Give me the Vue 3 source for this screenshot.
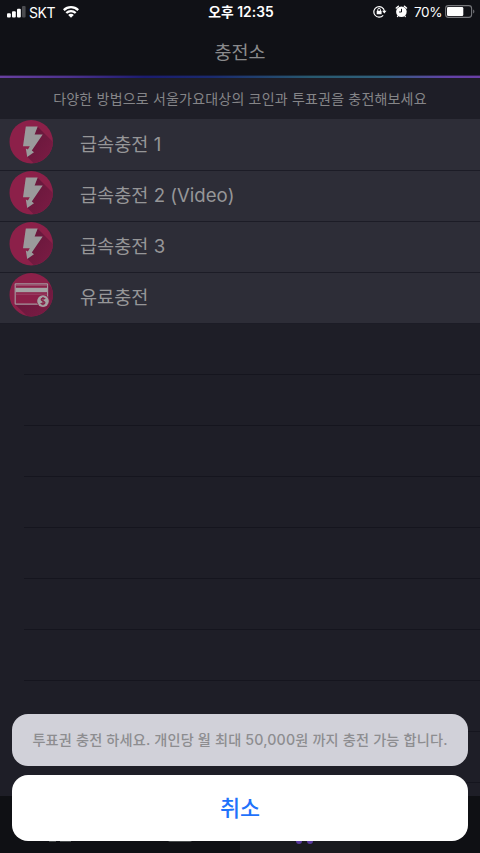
<script setup>
const methods = [
  { label: '급속충전 1', icon: 'bolt' },
  { label: '급속충전 2 (Video)', icon: 'bolt' },
  { label: '급속충전 3', icon: 'bolt' },
  { label: '유료충전', icon: 'card' },
]
const emptyRows = 9
</script>

<template>
  <main class="screen">
    <header class="top">
      <div class="status">
        <div class="status-left">
          <svg class="signal" width="19" height="12" viewBox="0 0 19 12">
            <rect x="0" y="7.3" width="3.8" height="4.2" rx="1" fill="#fff" />
            <rect x="5" y="5.2" width="3.8" height="6.3" rx="1" fill="#fff" />
            <rect x="10" y="2.8" width="3.8" height="8.7" rx="1" fill="#fff" />
            <rect x="15" y="0" width="3.6" height="11.5" rx="1" fill="#4b4c50" />
          </svg>
          <span class="carrier">SKT</span>
          <svg class="wifi" width="16" height="12" viewBox="0 0 16 12" fill="none" stroke="#fff" stroke-width="2.3">
            <path d="M0.8 4.1C4.8 0.2 11.2 0.2 15.2 4.1" />
            <path d="M3.3 7C5.9 4.5 10.1 4.5 12.7 7" />
            <path d="M5.2 8.9C6.7 7.4 9.3 7.4 10.8 8.9L8 11.8Z" fill="#fff" stroke="none" />
          </svg>
        </div>
        <div class="clock">오후 12:35</div>
        <div class="status-right">
          <svg class="lock" width="14" height="13" viewBox="0 0 14 13" fill="none" stroke="#fff" stroke-width="1.2">
            <path d="M10.2 10.3A5.3 5.3 0 1 1 11.4 6" />
            <path d="M9.1 5.8H13.5L11.3 8.6Z" fill="#fff" stroke="none" />
            <rect x="3.7" y="5.7" width="4.9" height="3.6" rx=".4" fill="#fff" stroke="none" />
            <path d="M4.7 6V4.8A1.4 1.4 0 0 1 7.5 4.8V6" stroke-width=".9" />
          </svg>
          <svg class="alarm" width="13" height="13" viewBox="0 0 13 13">
            <circle cx="6.4" cy="6.7" r="5.3" fill="#fff" />
            <path d="M1.3 3L3.4 1.2M9.4 1.2L11.5 3" stroke="#fff" stroke-width="1.5" stroke-linecap="round" />
            <path d="M3 10.8L2.4 11.6M9.8 10.8L10.4 11.6" stroke="#fff" stroke-width="1.1" stroke-linecap="round" />
            <path d="M6.5 3.8V7H4.1" stroke="#101116" stroke-width="1" fill="none" />
          </svg>
          <span class="percent">70%</span>
          <svg class="battery" width="30" height="13" viewBox="0 0 30 13">
            <rect x=".6" y=".6" width="26" height="11.8" rx="2.8" fill="none" stroke="#77787c" stroke-width="1.1" />
            <rect x="2" y="2" width="16.3" height="9" rx="1.3" fill="#fff" />
            <path d="M28.2 4.5C29.8 5 29.8 8 28.2 8.5Z" fill="#77787c" />
          </svg>
        </div>
      </div>
      <h1 class="title">충전소</h1>
      <div class="rainbow"></div>
    </header>

    <p class="intro">다양한 방법으로 서울가요대상의 코인과 투표권을 충전해보세요</p>

    <ul class="list">
      <li v-for="(m, i) in methods" :key="m.label" class="row">
        <svg class="badge" width="44" height="44" viewBox="0 0.4 44 44">
          <defs>
            <clipPath :id="'disc' + i"><circle cx="22.2" cy="22.1" r="21.7" /></clipPath>
            <linearGradient :id="'shade' + i" x1="0" y1="0" x2="1" y2="1">
              <stop offset="0" stop-color="#64163a" />
              <stop offset="1" stop-color="#801d46" />
            </linearGradient>
          </defs>
          <circle cx="22.2" cy="22.1" r="21.7" fill="#8c2049" />
          <g :clip-path="`url(#disc${i})`">
            <template v-if="m.icon === 'bolt'">
              <path d="M28.5 7L49 27.5V50H31L18 37Z" :fill="`url(#shade${i})`" />
              <path d="M16.8 6.9H28.7L25.6 15H33.7L22.8 30.8L25 32.6L18.2 37.4L16.8 28.8L18.9 30L20.8 26.6H14Z" fill="#9a9a9b" />
            </template>
            <template v-else>
              <path d="M38.5 11L52 24V53H28L5.5 31.5Z" :fill="`url(#shade${i})`" />
              <rect x="6.2" y="11.2" width="32.4" height="20.4" rx=".7" fill="#8c2049" stroke="#a4959d" stroke-width="1.2" />
              <rect x="6.6" y="15.2" width="31.6" height="4.4" fill="#a4a3a4" />
              <path d="M6.6 12.9H38.4M6.6 21.6H38.4" stroke="#a4637e" stroke-width=".6" />
              <circle cx="34" cy="28.5" r="6.5" fill="#8c2049" />
              <circle cx="34" cy="28.5" r="5.8" fill="#a4a2a3" />
              <path d="M36.1 26.5C35.3 25.1 32.1 25.3 32.2 27.1C32.3 28.8 36 28.1 35.9 30.1C35.8 31.9 32.5 31.8 31.8 30.3M34 24.3V32.7" fill="none" stroke="#852347" stroke-width="1.3" />
            </template>
          </g>
        </svg>
        <span class="label">{{ m.label }}</span>
      </li>
      <li v-for="n in emptyRows" :key="n" class="blank"></li>
    </ul>

    <nav class="tabs">
      <div class="tab"><i class="stub"></i><i class="stub wide"></i></div>
      <div class="tab"><i class="stub bar"></i></div>
      <div class="tab active"><i class="wheel"></i><i class="wheel"></i></div>
      <div class="tab"></div>
    </nav>

    <section class="sheet">
      <div class="message">투표권 충전 하세요. 개인당 월 최대 50,000원 까지 충전 가능 합니다.</div>
      <button class="cancel">취소</button>
    </section>
  </main>
</template>

<style>
body {
  margin: 0;
  background: #1e1e27;
}
</style>

<style scoped>
.screen {
  position: relative;
  display: flex;
  flex-direction: column;
  width: 480px;
  height: 853px;
  overflow: hidden;
  background: #1e1e27;
  font-family: Inter, "Noto Sans CJK KR", sans-serif;
}
.top {
  flex: none;
  height: 78px;
  background: #101116;
}
.status {
  display: grid;
  grid-template-columns: 1fr auto 1fr;
  height: 25px;
  color: #fff;
  line-height: 25px;
}
.status-left,
.status-right {
  display: flex;
  align-items: center;
}
.status-left {
  padding-left: 7px;
}
.signal {
  margin-top: -1px;
}
.carrier {
  margin-left: 3px;
  font-size: 14px;
  letter-spacing: -0.4px;
}
.wifi {
  margin-top: -1px;
  margin-left: 8px;
}
.clock {
  padding-left: 2px;
  font-size: 13.8px;
  font-weight: 600;
  letter-spacing: 0.06px;
  white-space: nowrap;
}
.status-right {
  justify-content: flex-end;
  padding-right: 5px;
}
.lock,
.alarm,
.battery {
  margin-top: -2px;
}
.alarm {
  margin-left: 8px;
}
.percent {
  margin-left: 6px;
  font-size: 13.5px;
  letter-spacing: -0.4px;
}
.battery {
  margin-left: 3px;
}
.title {
  height: 50px;
  margin: 0;
  color: #8a8a8c;
  font-size: 18.5px;
  font-weight: 400;
  line-height: 54px;
  text-align: center;
}
.rainbow {
  height: 3px;
  background: linear-gradient(90deg, #6840a0 0, #4b318d 15%, #1b1c70 30%, #1a2a6e 44%, #28596f 65%, #30607c 80%, #6242a8 93%, #6a3fa5 100%);
  box-shadow: inset 0 1px #10111699;
}
.intro {
  flex: none;
  height: 41px;
  margin: 0;
  color: #858588;
  font-size: 14px;
  letter-spacing: 0.19px;
  line-height: 41px;
  text-align: center;
  white-space: nowrap;
}
.list {
  flex: none;
  display: flex;
  flex-direction: column;
  height: 677px;
  margin: 0;
  padding: 0;
  overflow: hidden;
  list-style: none;
}
.row {
  flex: none;
  display: flex;
  box-sizing: border-box;
  height: 51px;
  padding-left: 9px;
  border-bottom: 1px solid #1c1c26;
  background: #2d2d37;
}
.row:first-child {
  height: 52px;
  padding-top: 1px;
}
.label {
  margin-left: 27px;
  color: #969698;
  font-size: 18.6px;
  line-height: 48px;
}
.blank {
  flex: none;
  box-sizing: border-box;
  height: 51px;
  margin-left: 24px;
  border-bottom: 1px solid #15151e;
}
.tabs {
  flex: none;
  display: grid;
  grid-template-columns: repeat(4, 1fr);
  height: 57px;
  background: #0f1014;
}
.tab {
  display: flex;
  justify-content: center;
  gap: 4px;
  padding-top: 41px;
}
.active {
  gap: 5px;
  padding-top: 42px;
  padding-left: 8px;
  background: #1a1b1f;
}
.stub {
  width: 7px;
  height: 5px;
  background: #484c4d;
}
.wide {
  width: 11px;
}
.bar {
  width: 24px;
  border-radius: 2px;
}
.wheel {
  width: 6px;
  height: 6px;
  border-radius: 50%;
  background: #5b3aa0;
}
.sheet {
  position: absolute;
  right: 12px;
  bottom: 12px;
  left: 12px;
  display: flex;
  flex-direction: column;
  gap: 9px;
}
.message {
  height: 52px;
  border-radius: 16px;
  background: #d1d1d9;
  color: #8d8d90;
  font-size: 14.2px;
  font-weight: 500;
  letter-spacing: 0.16px;
  line-height: 52px;
  text-align: center;
  white-space: nowrap;
}
.cancel {
  height: 66px;
  padding: 0;
  border: 0;
  border-radius: 16px;
  background: #fff;
  color: #1f72fb;
  font-family: inherit;
  font-size: 21.8px;
  font-weight: 500;
  line-height: 66px;
}
</style>
